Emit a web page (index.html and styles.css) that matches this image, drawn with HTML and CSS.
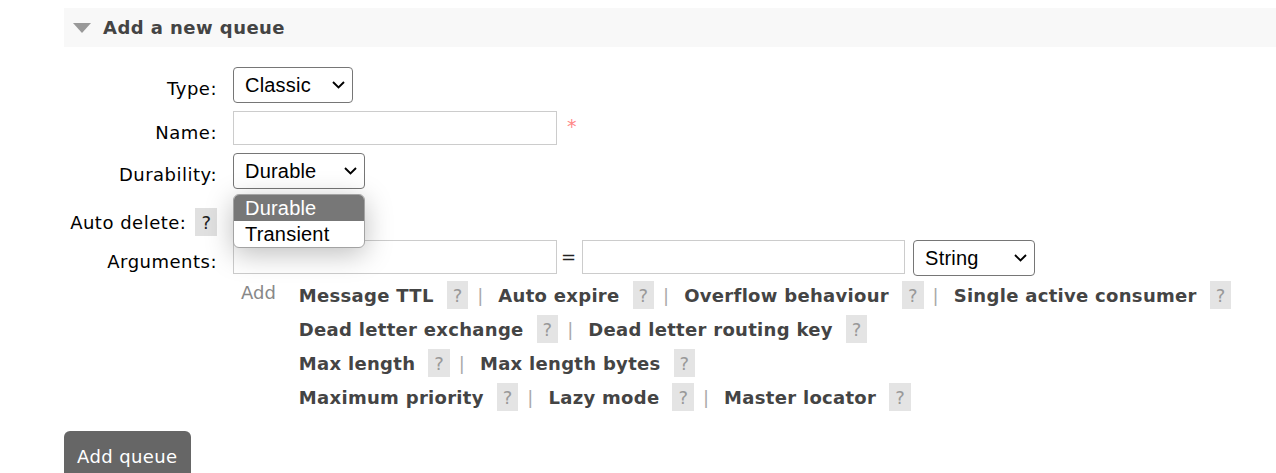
FILE: index.html
```html
<!DOCTYPE html>
<html lang="en">
<head>
<meta charset="utf-8">
<title>Add a new queue</title>
<link rel="stylesheet" href="styles.css">
</head>
<body>
<div class="page">
  <div class="section-head">
    <svg class="caret" width="18" height="10" viewBox="0 0 18 10"><polygon points="0,0 18,0 9,10" fill="#999"/></svg>
    <h2 class="section-title">Add a new queue</h2>
  </div>
  <form class="queue-form">
    <div class="form-grid">
      <label class="lbl">Type:</label>
      <div class="ctl">
        <div class="select sel-type"><span class="select-text">Classic</span><svg class="chev" width="13" height="8" viewBox="0 0 13 8"><polyline points="1,1 6.5,6.5 12,1" fill="none" stroke="#000" stroke-width="1.9"/></svg></div>
      </div>

      <label class="lbl">Name:</label>
      <div class="ctl">
        <input class="text-input" type="text">
        <span class="req">*</span>
      </div>

      <label class="lbl">Durability:</label>
      <div class="ctl ctl-dur">
        <div class="select sel-dur"><span class="select-text">Durable</span><svg class="chev" width="13" height="8" viewBox="0 0 13 8"><polyline points="1,1 6.5,6.5 12,1" fill="none" stroke="#000" stroke-width="1.9"/></svg></div>
        <ul class="dropdown">
          <li class="opt opt-selected">Durable</li>
          <li class="opt">Transient</li>
        </ul>
      </div>

      <label class="lbl">Auto delete:<span class="help help-dark">?</span></label>
      <div class="ctl">
        <div class="select sel-ad"></div>
      </div>

      <label class="lbl">Arguments:</label>
      <div class="ctl ctl-args">
        <div class="arg-row">
          <input class="text-input" type="text">
          <span class="eq">=</span>
          <input class="text-input text-input-2" type="text">
          <div class="select sel-str"><span class="select-text">String</span><svg class="chev" width="13" height="8" viewBox="0 0 13 8"><polyline points="1,1 6.5,6.5 12,1" fill="none" stroke="#000" stroke-width="1.9"/></svg></div>
        </div>
        <div class="arg-links">
          <span class="add">Add</span>
          <div class="links">
            <div class="link-line">
              <span class="arg-link">Message TTL</span><span class="help">?</span><span class="sep">|</span><span class="arg-link">Auto expire</span><span class="help">?</span><span class="sep">|</span><span class="arg-link">Overflow behaviour</span><span class="help">?</span><span class="sep">|</span><span class="arg-link">Single active consumer</span><span class="help">?</span>
            </div>
            <div class="link-line">
              <span class="arg-link">Dead letter exchange</span><span class="help">?</span><span class="sep">|</span><span class="arg-link">Dead letter routing key</span><span class="help">?</span>
            </div>
            <div class="link-line">
              <span class="arg-link">Max length</span><span class="help">?</span><span class="sep">|</span><span class="arg-link">Max length bytes</span><span class="help">?</span>
            </div>
            <div class="link-line">
              <span class="arg-link">Maximum priority</span><span class="help">?</span><span class="sep">|</span><span class="arg-link">Lazy mode</span><span class="help">?</span><span class="sep">|</span><span class="arg-link">Master locator</span><span class="help">?</span>
            </div>
          </div>
        </div>
      </div>
    </div>
    <button class="btn" type="button">Add queue</button>
  </form>
</div>
</body>
</html>
```

FILE: styles.css
```css
* { box-sizing: border-box; }

html, body {
  margin: 0;
  padding: 0;
  background: #fff;
  overflow: hidden;
}

body {
  font-family: "DejaVu Sans", Verdana, sans-serif;
  font-size: 18px;
  line-height: 21px;
  letter-spacing: 0.5px;
  color: #000;
}

.page {
  padding: 8px 0 0 64px;
}

.section-head {
  display: flex;
  align-items: center;
  height: 39px;
  background: #f8f8f8;
  padding-left: 9px;
}

.caret {
  display: block;
  flex: none;
}

.section-title {
  margin: 0 0 0 12px;
  font-size: 18px;
  font-weight: bold;
  letter-spacing: 0.45px;
  color: #444;
  line-height: 21px;
}

.queue-form {
  margin: 20px 0 0 0;
}

.form-grid {
  display: grid;
  grid-template-columns: 153px auto;
  grid-template-rows: 36px 34px 36px 35px auto;
  column-gap: 16px;
  row-gap: 8px;
}

.lbl {
  text-align: right;
  padding-top: 11px;
  white-space: nowrap;
  color: #000;
}

.ctl {
  display: flex;
  align-items: flex-start;
}

.ctl-dur {
  position: relative;
}

.select {
  display: flex;
  align-items: center;
  justify-content: space-between;
  height: 36px;
  border: 1px solid #767676;
  border-radius: 4px;
  background: #fff;
  padding: 0 7px 0 11px;
  font-family: "Liberation Sans", Arial, sans-serif;
  font-size: 20px;
  letter-spacing: 0.2px;
  color: #000;
}

.chev { display: block; flex: none; }

.sel-type { width: 120px; }
.sel-dur { width: 132px; }
.sel-ad { width: 90px; height: 35px; }
.sel-str { width: 122px; margin-left: 8px; }

.text-input {
  width: 324px;
  height: 34px;
  border: 1px solid #ccc;
  border-radius: 0;
  padding: 0 6px;
  margin: 0;
  font-family: "Liberation Sans", Arial, sans-serif;
  font-size: 18px;
  background: #fff;
  outline: none;
}

.text-input-2 { width: 323px; }

.req {
  color: #f88;
  margin: 5px 0 0 10px;
  font-size: 19px;
}

.dropdown {
  position: absolute;
  top: 41px;
  left: 0;
  width: 132px;
  margin: 0;
  padding: 0;
  list-style: none;
  background: #fff;
  border: 1px solid #a3a3a3;
  border-radius: 6px;
  overflow: hidden;
  box-shadow: 0 6px 28px rgba(0, 0, 0, 0.26);
  font-family: "Liberation Sans", Arial, sans-serif;
  font-size: 20px;
  letter-spacing: 0.2px;
  z-index: 5;
}

.opt {
  height: 26px;
  line-height: 26px;
  padding-left: 11px;
  color: #000;
}

.opt-selected {
  background: #777;
  color: #fff;
}

.ctl-args {
  flex-direction: column;
}

.arg-row {
  display: flex;
  align-items: flex-start;
}

.eq {
  margin: 0 6px 0 4px;
  line-height: 34px;
  letter-spacing: 0;
  color: #222;
}

.arg-links {
  display: flex;
  align-items: flex-start;
  margin-top: 3px;
}

.add {
  padding-left: 8px;
  color: #888;
  line-height: 28px;
  letter-spacing: 0;
  flex: none;
}

.links {
  margin-left: 23px;
}

.link-line {
  line-height: 34px;
  white-space: nowrap;
}

.arg-link {
  font-weight: bold;
  letter-spacing: 0.3px;
  color: #444;
}

.help {
  display: inline-block;
  background: #e4e4e4;
  color: #999;
  padding: 4px 6px 3px;
  line-height: 21px;
  letter-spacing: 0;
  margin-left: 13px;
}

.help-dark {
  color: #222;
  margin-left: 9px;
  background: #e0e0e0;
}

.sep {
  margin: 0 15px 0 9px;
  letter-spacing: 0;
  color: #aaa;
}

.btn {
  display: block;
  margin-top: 16px;
  border: none;
  background: #666;
  color: #fff;
  font-family: "DejaVu Sans", Verdana, sans-serif;
  font-size: 18px;
  line-height: 21px;
  letter-spacing: 0.4px;
  padding: 15px 13px;
  border-radius: 6px;
  cursor: pointer;
}
```
